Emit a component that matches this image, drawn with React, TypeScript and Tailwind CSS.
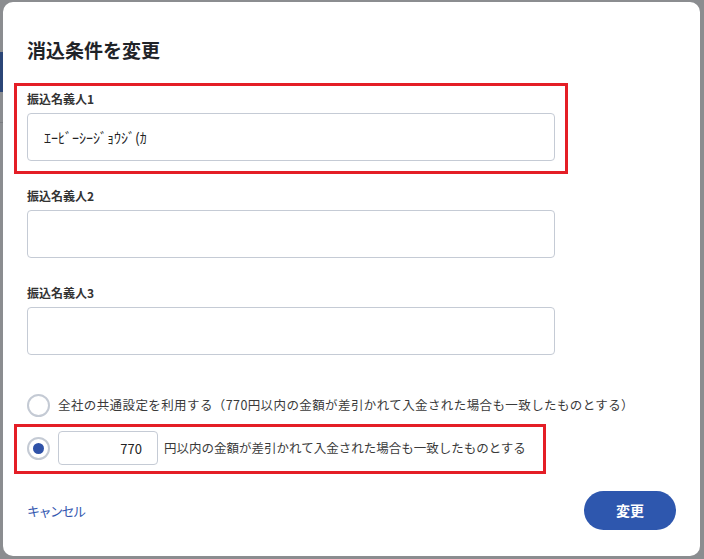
import React from "react";

const jp = "font-['Noto_Sans_CJK_JP','Noto_Sans',sans-serif]";

function Field({ label, value }: { label: string; value?: string }) {
  return (
    <div className="flex flex-col">
      <label className="text-[12px] leading-[18px] font-bold text-[#333]">{label}</label>
      <input
        readOnly
        value={value ?? ""}
        className="mt-[5px] h-[48px] w-full rounded-[4px] border border-[#c5cbd5] bg-white pl-4 text-[14px] text-[#222] outline-none"
      />
    </div>
  );
}

function Radio({ checked }: { checked?: boolean }) {
  return (
    <span className="flex h-[23px] w-[23px] shrink-0 items-center justify-center rounded-full border-2 border-[#c4cad4] bg-white">
      {checked && <span className="h-[11px] w-[11px] rounded-full bg-[#2f52a8]" />}
    </span>
  );
}

export default function App() {
  return (
    <div className={`flex h-[559px] w-[704px] bg-[#8b8d90] pt-[2px] pr-[4px] pb-[3px] ${jp}`}>
      {/* page behind the overlay */}
      <div className="flex w-[3px] flex-col pt-[50px]">
        <div className="h-[40px] bg-[#2b4677]" />
        <div className="mt-[30px] h-px bg-[#7a7c80]" />
      </div>

      <div className="flex flex-1 flex-col rounded-[10px] bg-white px-6 pt-[34px] pb-[26px]">
        <h2 className="text-[19px] leading-[28px] font-bold text-[#1f2328]">消込条件を変更</h2>

        <div className="mt-[26px] flex w-[528px] flex-col gap-[26px]">
          <div className="relative">
            <Field label="振込名義人1" value="ｴｰﾋﾞｰｼｰｼﾞｮｳｼﾞ(ｶ" />
            <div className="pointer-events-none absolute -top-[7px] -right-[13px] -bottom-[13px] -left-[13px] border-[3px] border-[#e41e26]" />
          </div>
          <Field label="振込名義人2" />
          <Field label="振込名義人3" />
        </div>

        <div className="mt-[33px] flex flex-col gap-[9px] text-[12.5px] text-[#3a3a3a]">
          <div className="flex h-[34px] items-center gap-2">
            <Radio />
            <span className="tracking-[0.4px]">
              全社の共通設定を利用する（770円以内の金額が差引かれて入金された場合も一致したものとする）
            </span>
          </div>
          <div className="relative flex h-[34px] w-fit items-center">
            <Radio checked />
            <input
              readOnly
              value="770"
              className="ml-2 h-[34px] w-[100px] rounded-[4px] border border-[#c5cbd5] bg-white pr-[15px] text-right text-[13px] text-[#222] outline-none"
            />
            <span className="ml-[6px]">円以内の金額が差引かれて入金された場合も一致したものとする</span>
            <div className="pointer-events-none absolute -top-[7px] -right-[20px] -bottom-[9px] -left-[13px] border-[3px] border-[#e41e26]" />
          </div>
        </div>

        <div className="mt-[26px] flex items-center justify-between">
          <button className="text-[13px] tracking-[-1.5px] text-[#3458b0]">キャンセル</button>
          <button className="h-[39px] w-[92px] rounded-full bg-[#2e57ae] text-[14px] font-bold text-white">
            変更
          </button>
        </div>
      </div>
    </div>
  );
}
